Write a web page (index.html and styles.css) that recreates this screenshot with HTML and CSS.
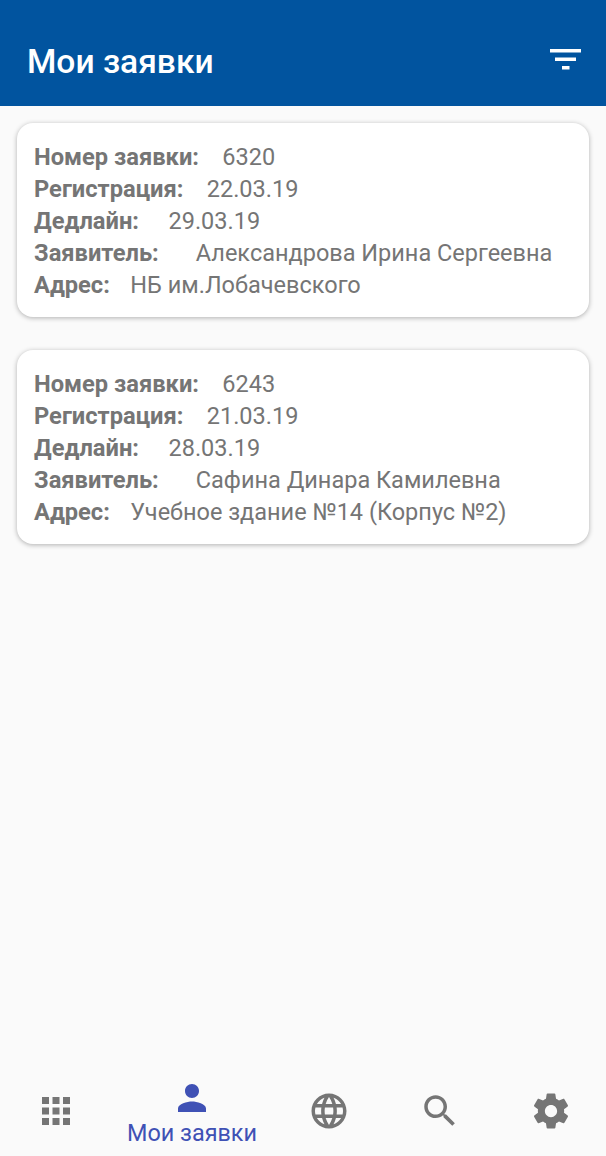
FILE: index.html
```html
<!DOCTYPE html>
<html lang="ru">
<head>
    <meta charset="UTF-8">
    <meta name="viewport" content="width=device-width, initial-scale=1.0">
    <title>Мои заявки</title>
    <link rel="stylesheet" href="styles.css">
</head>
<body>
    <div class="page">
        <header class="topbar">
            <h1 class="topbar-title">Мои заявки</h1>
            <svg class="filter-icon" viewBox="0 0 31 21" aria-hidden="true">
                <path d="M0 0h31v3.500H0zM5 8.500h21V12H5zM12 17h7.500v3.500H12z"/>
            </svg>
        </header>

        <main class="list">
            <div class="card">
                <div class="row"><b>Номер заявки:</b><span class="val-number">6320</span></div>
                <div class="row"><b>Регистрация:</b><span class="val-number">22.03.19</span></div>
                <div class="row"><b>Дедлайн:</b><span class="val-deadline">29.03.19</span></div>
                <div class="row"><b>Заявитель:</b><span class="val-person">Александрова Ирина Сергеевна</span></div>
                <div class="row"><b>Адрес:</b><span class="val-address">НБ им.Лобачевского</span></div>
            </div>
            <div class="card">
                <div class="row"><b>Номер заявки:</b><span class="val-number">6243</span></div>
                <div class="row"><b>Регистрация:</b><span class="val-number">21.03.19</span></div>
                <div class="row"><b>Дедлайн:</b><span class="val-deadline">28.03.19</span></div>
                <div class="row"><b>Заявитель:</b><span class="val-person">Сафина Динара Камилевна</span></div>
                <div class="row"><b>Адрес:</b><span class="val-address">Учебное здание №14 (Корпус №2)</span></div>
            </div>
        </main>

        <nav class="tabs">
            <div class="tab">
                <svg class="tab-icon" viewBox="0 0 24 24"><path d="M4 8h4V4H4v4zm6 12h4v-4h-4v4zm-6 0h4v-4H4v4zm0-6h4v-4H4v4zm6 0h4v-4h-4v4zm6-10v4h4V4h-4zm-6 4h4V4h-4v4zm6 6h4v-4h-4v4zm0 6h4v-4h-4v4z"/></svg>
            </div>
            <div class="tab tab-active">
                <svg class="tab-icon" viewBox="0 0 24 24"><path d="M12 12c2.210 0 4-1.790 4-4s-1.790-4-4-4-4 1.790-4 4 1.790 4 4 4zm0 2c-2.670 0-8 1.340-8 4v2h16v-2c0-2.660-5.330-4-8-4z"/></svg>
                <span class="tab-label">Мои заявки</span>
            </div>
            <div class="tab">
                <svg class="tab-icon" viewBox="0 0 24 24"><path d="M11.990 2C6.470 2 2 6.480 2 12s4.470 10 9.990 10C17.520 22 22 17.520 22 12S17.520 2 11.990 2zm6.930 6h-2.950c-.32-1.250-.78-2.450-1.380-3.560 1.840.63 3.370 1.910 4.330 3.560zM12 4.040c.83 1.200 1.480 2.530 1.910 3.960h-3.820c.43-1.430 1.080-2.760 1.910-3.960zM4.260 14C4.100 13.360 4 12.690 4 12s.1-1.360.26-2h3.380c-.08.66-.14 1.320-.14 2 0 .68.06 1.340.14 2H4.260zm.82 2h2.950c.32 1.250.78 2.450 1.380 3.560-1.840-.63-3.370-1.900-4.330-3.560zm2.950-8H5.080c.96-1.660 2.490-2.930 4.330-3.560C8.810 5.550 8.350 6.750 8.030 8zM12 19.960c-.83-1.200-1.480-2.530-1.910-3.960h3.820c-.43 1.430-1.080 2.760-1.910 3.960zM14.340 14H9.660c-.09-.66-.16-1.320-.16-2 0-.68.07-1.350.16-2h4.680c.09.65.16 1.320.16 2 0 .68-.07 1.340-.16 2zm.25 5.560c.6-1.110 1.060-2.310 1.380-3.560h2.950c-.96 1.650-2.490 2.930-4.330 3.560zM16.360 14c.08-.66.14-1.320.14-2 0-.68-.06-1.340-.14-2h3.380c.16.64.26 1.310.26 2s-.1 1.360-.26 2h-3.380z"/></svg>
            </div>
            <div class="tab">
                <svg class="tab-icon" viewBox="0 0 24 24"><path d="M15.500 14h-.79l-.28-.27C15.410 12.590 16 11.110 16 9.500 16 5.910 13.090 3 9.500 3S3 5.910 3 9.500 5.910 16 9.500 16c1.610 0 3.090-.59 4.230-1.570l.27.28v.79l5 4.990L20.490 19l-4.990-5zm-6 0C7.010 14 5 11.990 5 9.500S7.010 5 9.500 5 14 7.010 14 9.500 11.990 14 9.500 14z"/></svg>
            </div>
            <div class="tab">
                <svg class="tab-icon" viewBox="0 0 24 24"><path d="M19.430 12.980c.04-.32.07-.64.07-.98s-.03-.66-.07-.98l2.110-1.650c.19-.15.24-.42.12-.64l-2-3.460c-.12-.22-.39-.3-.61-.22l-2.490 1c-.52-.4-1.080-.73-1.690-.98l-.38-2.650C14.460 2.180 14.250 2 14 2h-4c-.25 0-.46.18-.49.42l-.38 2.650c-.61.25-1.170.59-1.690.98l-2.490-1c-.23-.09-.49 0-.61.22l-2 3.460c-.13.22-.07.49.12.64l2.110 1.650c-.04.32-.07.65-.07.98s.03.66.07.98l-2.110 1.650c-.19.15-.24.42-.12.64l2 3.460c.12.22.39.3.61.22l2.490-1c.52.4 1.080.73 1.690.98l.38 2.650c.03.24.24.42.49.42h4c.25 0 .46-.18.49-.42l.38-2.650c.61-.25 1.170-.59 1.690-.98l2.490 1c.23.09.49 0 .61-.22l2-3.460c.12-.22.07-.49-.12-.64l-2.110-1.650zM12 15.500c-1.930 0-3.500-1.570-3.500-3.500s1.570-3.500 3.500-3.500 3.500 1.570 3.500 3.500-1.570 3.500-3.500 3.500z"/></svg>
            </div>
        </nav>
    </div>
</body>
</html>
```

FILE: styles.css
```css
body {
    margin: 0;
    background-color: #fafafa;
    font-family: Roboto, "Noto Sans", sans-serif;
}

.page {
    display: flex;
    flex-direction: column;
    min-height: 100vh;
}

.topbar {
    display: flex;
    justify-content: space-between;
    align-items: center;
    height: 106px;
    padding: 16px 25px 0 27px;
    box-sizing: border-box;
    background-color: #01549f;
    color: #fff;
}

.topbar-title {
    margin: 0;
    font-size: 33.6px;
    font-weight: 500;
}

.filter-icon {
    width: 31px;
    height: 21px;
    fill: #fff;
    margin-top: -3px;
}

.list {
    flex: 1;
    display: flex;
    flex-direction: column;
    gap: 33px;
    padding: 17px 17px 0;
}

.card {
    padding: 18px 17px 16px;
    background-color: #fff;
    border-radius: 16px;
    box-shadow: 0 1px 5px rgba(0,0,0,0.3);
    color: #757575;
    font-size: 23.5px;
    line-height: 32px;
}

.row {
    white-space: nowrap;
}

.row b {
    font-size: 23.7px;
}

.val-number {
    margin-left: 23.3px;
}

.val-deadline {
    margin-left: 29.5px;
}

.val-person {
    margin-left: 37px;
}

.val-address {
    margin-left: 20.5px;
}

.tabs {
    display: grid;
    grid-template-columns: 111px 162px 1fr 1fr 1fr;
    height: 90px;
}

.tab {
    display: flex;
    flex-direction: column;
    align-items: center;
    justify-content: center;
    fill: #757575;
}

.tab-icon {
    width: 42px;
    height: 42px;
}

.tab-active {
    justify-content: flex-start;
    padding-top: 11px;
    color: #3f51b5;
    fill: #3f51b5;
}

.tab-label {
    font-size: 23.4px;
    line-height: 28px;
}
```
